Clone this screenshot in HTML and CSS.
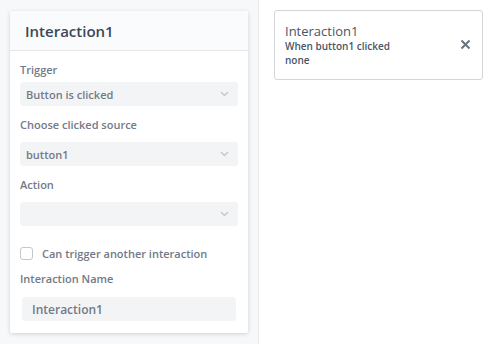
FILE: index.html
```html
<!DOCTYPE html>
<html lang="en">
  <head>
    <meta charset="UTF-8">
    <title>Interactions</title>
    <link rel="stylesheet" href="styles.css">
  </head>
  <body>
    <div class="layout">
      <div class="sidebar">
        <div class="panel">
          <div class="panel-header">Interaction1</div>
          <div class="panel-body">
            <label class="field-label">Trigger</label>
            <div class="select first">
              <span>Button is clicked</span>
              <svg class="chevron" width="9" height="6" viewBox="0 0 9 6"><path d="M1 1l3.5 3.5L8 1" fill="none" stroke="#c4c8ce" stroke-width="1.4"/></svg>
            </div>

            <label class="field-label">Choose clicked source</label>
            <div class="select">
              <span>button1</span>
              <svg class="chevron" width="9" height="6" viewBox="0 0 9 6"><path d="M1 1l3.5 3.5L8 1" fill="none" stroke="#c4c8ce" stroke-width="1.4"/></svg>
            </div>

            <label class="field-label">Action</label>
            <div class="select">
              <span></span>
              <svg class="chevron" width="9" height="6" viewBox="0 0 9 6"><path d="M1 1l3.5 3.5L8 1" fill="none" stroke="#c4c8ce" stroke-width="1.4"/></svg>
            </div>

            <div class="check-row">
              <span class="checkbox"></span>
              <span>Can trigger another interaction</span>
            </div>

            <label class="field-label name-label">Interaction Name</label>
            <div class="text-input">Interaction1</div>
          </div>
        </div>
      </div>
      <div class="main">
        <div class="item-card">
          <div class="item-text">
            <div class="item-title">Interaction1</div>
            <div class="item-line">When button1 clicked</div>
            <div class="item-line">none</div>
          </div>
          <svg class="close" width="11" height="11" viewBox="0 0 11 11"><path d="M1.5 1.5l8 8M9.5 1.5l-8 8" stroke="#6b7280" stroke-width="2"/></svg>
        </div>
      </div>
    </div>
  </body>
</html>
```

FILE: styles.css
```css
:root {
  --text-dark: #3b4759;
  --text-muted: #727a87;
  --field-bg: #f3f4f6;
  --line: #e5e7eb;
}

* {
  box-sizing: border-box;
}

body {
  margin: 0;
  font-family: 'Open Sans', sans-serif;
  color: var(--text-dark);
  background: #ffffff;
}

.layout {
  display: flex;
  height: 344px;
}

.sidebar {
  width: 259px;
  background: #f7f8fa;
  border-right: 1px solid #e9ebee;
  padding: 11px 10px 0 10px;
}

.panel {
  background: #ffffff;
  box-shadow: 0 1px 4px rgba(0, 0, 0, 0.16);
  border-radius: 2px;
}

.panel-header {
  height: 40px;
  padding: 0 15px;
  display: flex;
  align-items: center;
  font-size: 15px;
  font-weight: 600;
  background: #fafbfc;
  border-bottom: 1px solid var(--line);
}

.panel-body {
  padding: 11px 10px 12px 10px;
  display: flex;
  flex-direction: column;
}

.field-label {
  font-size: 11px;
  font-weight: 600;
  color: var(--text-muted);
  line-height: 15px;
  margin-bottom: 10px;
}

.select {
  height: 24px;
  background: var(--field-bg);
  border-radius: 3px;
  display: flex;
  align-items: center;
  justify-content: space-between;
  padding: 0 9px 0 6px;
  font-size: 11px;
  font-weight: 600;
  color: var(--text-muted);
  margin-bottom: 11px;
}

.select.first {
  margin-top: -5px;
  margin-bottom: 11px;
}

.check-row {
  display: flex;
  align-items: center;
  gap: 9px;
  font-size: 11px;
  font-weight: 600;
  color: var(--text-muted);
  margin-top: 9px;
  margin-bottom: 10px;
}

.checkbox {
  width: 13px;
  height: 13px;
  border: 1px solid #c3c7cd;
  border-radius: 3px;
  background: #fff;
}

.name-label {
  margin-bottom: 11px;
}

.text-input {
  height: 24px;
  margin: 0 2px;
  background: var(--field-bg);
  border-radius: 3px;
  display: flex;
  align-items: center;
  padding: 0 10px;
  font-size: 12px;
  font-weight: 600;
  color: var(--text-muted);
}

.main {
  flex: 1;
  padding: 10px 16px 0 15px;
}

.item-card {
  border: 1px solid #d2d5d9;
  border-radius: 3px;
  height: 70px;
  display: flex;
  align-items: center;
  justify-content: space-between;
  padding: 0 11px 0 10px;
}

.item-title {
  font-size: 13px;
  line-height: 16px;
  color: #4a5568;
}

.item-line {
  font-size: 10px;
  font-weight: 600;
  line-height: 14px;
  color: #4a5568;
}

.close {
  margin-top: -2px;
}
```
